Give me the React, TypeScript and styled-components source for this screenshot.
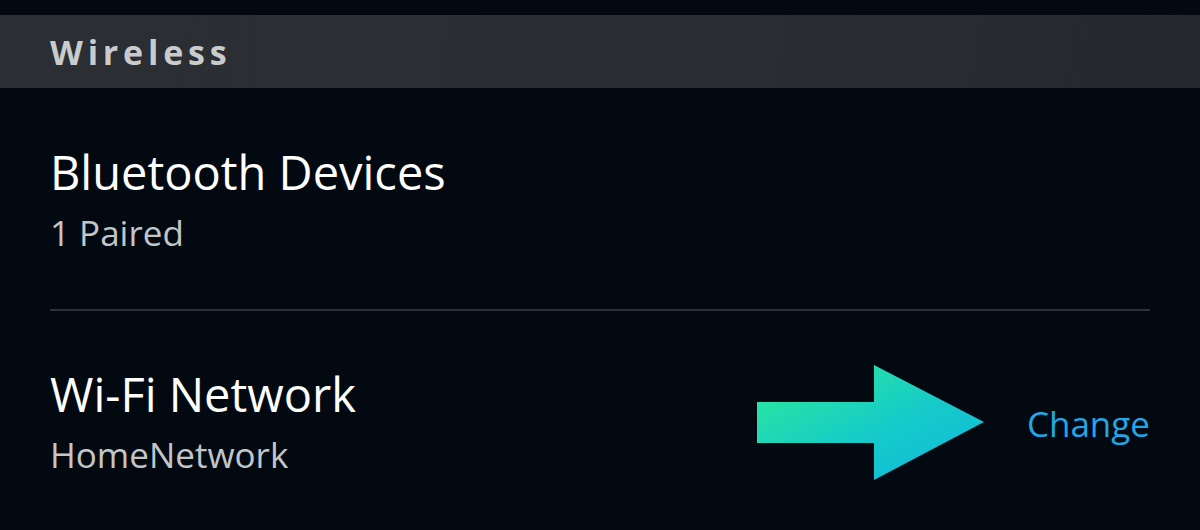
import React from "react";
import styled, { createGlobalStyle } from "styled-components";

const GlobalStyle = createGlobalStyle`
  html, body {
    margin: 0;
    padding: 0;
    background: #020911;
  }
  body {
    font-family: "Open Sans", "Noto Sans", sans-serif;
  }
`;

const Page = styled.div`
  width: 1200px;
  height: 530px;
  padding-top: 15px;
  box-sizing: border-box;
  background: #020911;
  overflow: hidden;
`;

const SectionHeader = styled.div`
  height: 73px;
  display: flex;
  align-items: center;
  padding-left: 50px;
  background: linear-gradient(100deg, #2b2e32 0%, #2a2d31 60%, #25282c 100%);
`;

const SectionTitle = styled.h2`
  margin: 0;
  font-size: 34px;
  font-weight: 700;
  letter-spacing: 4.8px;
  color: #c9cbcd;
`;

const List = styled.div`
  padding: 0 50px;
`;

interface RowProps {
  $top: number;
}

const Row = styled.div<RowProps>`
  display: flex;
  align-items: flex-start;
  justify-content: space-between;
  padding-top: ${(p) => p.$top}px;
  height: 221px;
  box-sizing: border-box;
`;

const TextBlock = styled.div`
  display: flex;
  flex-direction: column;
`;

const Title = styled.div`
  font-size: 47px;
  line-height: 56px;
  color: #ffffff;
`;

const Subtitle = styled.div`
  font-size: 35px;
  line-height: 42px;
  color: #c3c6c9;
  margin-top: 12px;
`;

const Divider = styled.div`
  height: 2px;
  background: #2c3136;
`;

const Action = styled.div`
  display: flex;
  align-items: center;
  gap: 42px;
  margin-top: -1px;
`;

const ChangeLink = styled.span`
  font-size: 35px;
  color: #22a6e6;
`;

const Arrow = () => (
  <svg width="228" height="116" viewBox="0 0 228 116">
    <defs>
      <linearGradient id="arrowGrad" x1="0" y1="0" x2="1" y2="1">
        <stop offset="0%" stopColor="#2fec96" />
        <stop offset="55%" stopColor="#16cbc8" />
        <stop offset="100%" stopColor="#0fb8e0" />
      </linearGradient>
    </defs>
    <polygon
      points="0,37 117,37 117,0 227,57 117,115 117,78 0,78"
      fill="url(#arrowGrad)"
    />
  </svg>
);

export default function App() {
  return (
    <>
      <GlobalStyle />
      <Page>
        <SectionHeader>
          <SectionTitle>Wireless</SectionTitle>
        </SectionHeader>
        <List>
          <Row $top={56}>
            <TextBlock>
              <Title>Bluetooth Devices</Title>
              <Subtitle>1 Paired</Subtitle>
            </TextBlock>
          </Row>
          <Divider />
          <Row $top={55}>
            <TextBlock>
              <Title>Wi-Fi Network</Title>
              <Subtitle>HomeNetwork</Subtitle>
            </TextBlock>
            <Action>
              <Arrow />
              <ChangeLink>Change</ChangeLink>
            </Action>
          </Row>
        </List>
      </Page>
    </>
  );
}
